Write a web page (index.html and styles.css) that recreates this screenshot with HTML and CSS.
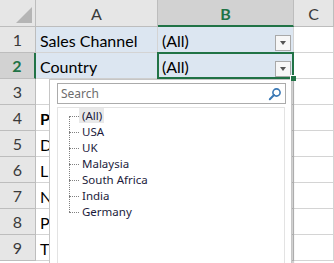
FILE: index.html
```html
<!DOCTYPE html>
<html lang="en">
  <head>
    <meta charset="UTF-8" />
    <title>Pivot filter</title>
    <link rel="stylesheet" href="styles.css">
  </head>
  <body>
    <div class="sheet">
      <div class="head corner"><span class="tri"></span></div>
      <div class="head col">A</div>
      <div class="head col sel">B</div>
      <div class="head col">C</div>

      <div class="head row">1</div>
      <div class="cell pivot">Sales Channel</div>
      <div class="cell pivot">(All)<span class="drop"></span></div>
      <div class="cell"></div>

      <div class="head row sel">2</div>
      <div class="cell pivot">Country</div>
      <div class="cell pivot active">(All)<span class="drop"></span><span class="handle"></span></div>
      <div class="cell"></div>

      <div class="head row">3</div>
      <div class="cell"></div>
      <div class="cell"></div>
      <div class="cell"></div>

      <div class="head row">4</div>
      <div class="cell bold">P</div>
      <div class="cell"></div>
      <div class="cell"></div>

      <div class="head row">5</div>
      <div class="cell">D</div>
      <div class="cell"></div>
      <div class="cell"></div>

      <div class="head row">6</div>
      <div class="cell">L</div>
      <div class="cell"></div>
      <div class="cell"></div>

      <div class="head row">7</div>
      <div class="cell">N</div>
      <div class="cell"></div>
      <div class="cell"></div>

      <div class="head row">8</div>
      <div class="cell">P</div>
      <div class="cell"></div>
      <div class="cell"></div>

      <div class="head row">9</div>
      <div class="cell">T</div>
      <div class="cell"></div>
      <div class="cell"></div>
    </div>

    <div class="filter">
      <div class="search">
        <span class="placeholder">Search</span>
        <svg class="glass" width="14" height="14" viewBox="0 0 14 14">
          <circle cx="8.5" cy="5.5" r="3.6" fill="none" stroke="#3a78b5" stroke-width="1.6"/>
          <line x1="6" y1="8" x2="1.8" y2="12.2" stroke="#3a78b5" stroke-width="2" stroke-linecap="round"/>
        </svg>
      </div>
      <div class="list">
        <ul class="tree">
          <li><span class="current">(All)</span></li>
          <li>USA</li>
          <li>UK</li>
          <li>Malaysia</li>
          <li>South Africa</li>
          <li>India</li>
          <li>Germany</li>
        </ul>
      </div>
    </div>
  </body>
</html>
```
FILE: styles.css
```css
body {
  margin: 0;
  background-color: #fff;
  overflow: hidden;
}
.sheet {
  display: grid;
  grid-template-columns: 36px 122px 136px 40px;
  grid-auto-rows: 26px;
  grid-template-rows: 27px;
  font-family: Lato, sans-serif;
  font-size: 16px;
  color: #000;
}
.head {
  box-sizing: border-box;
  background-color: #e6e6e6;
  border-right: 1px solid #bdbdbd;
  border-bottom: 1px solid #bdbdbd;
  color: #3a3a3a;
  display: flex;
  align-items: center;
  justify-content: center;
}
.corner {
  position: relative;
}
.tri {
  position: absolute;
  right: 3px;
  bottom: 3px;
  width: 0;
  height: 0;
  border-left: 16px solid transparent;
  border-bottom: 16px solid #b5b5b5;
}
.head.col {
  padding-top: 1px;
}
.head.sel {
  background-color: #d2d2d2;
  color: #217346;
  font-weight: bold;
}
.head.col.sel {
  border-bottom: 2px solid #217346;
}
.head.row.sel {
  border-right: 2px solid #217346;
}
.cell {
  box-sizing: border-box;
  border-right: 1px solid #d4d4d4;
  border-bottom: 1px solid #d4d4d4;
  padding: 0 0 2px 4px;
  display: flex;
  align-items: flex-end;
  position: relative;
  white-space: nowrap;
  overflow: hidden;
}
.cell.bold {
  font-weight: bold;
}
.cell.pivot {
  background-color: #dce6f1;
}
.active {
  overflow: visible;
}
.active::after {
  content: "";
  position: absolute;
  left: -1px;
  top: -1px;
  right: -1px;
  bottom: -1px;
  border: 2px solid #217346;
  pointer-events: none;
}
.drop {
  position: absolute;
  right: 2px;
  bottom: 1px;
  width: 16px;
  height: 16px;
  box-sizing: border-box;
  background-color: #f7f7f7;
  border: 1px solid #a9a9a9;
}
.drop::after {
  content: "";
  position: absolute;
  left: 4px;
  top: 5px;
  border-left: 3.5px solid transparent;
  border-right: 3.5px solid transparent;
  border-top: 4px solid #555;
}
.handle {
  position: absolute;
  right: -3px;
  bottom: -3px;
  width: 5px;
  height: 5px;
  background-color: #217346;
  border-left: 1px solid #fff;
  border-top: 1px solid #fff;
  z-index: 3;
}
.filter {
  position: absolute;
  left: 49px;
  top: 79px;
  width: 243px;
  height: 184px;
  box-sizing: border-box;
  background-color: #fff;
  border: 1px solid #c6c6c6;
  border-bottom: none;
  box-shadow: 2px 0 1px rgba(0, 0, 0, 0.18);
  padding: 3px 5px 0 7px;
  display: flex;
  flex-direction: column;
  gap: 3px;
  z-index: 2;
  font-family: "Noto Sans", sans-serif;
  font-size: 11.5px;
}
.search {
  height: 21px;
  box-sizing: border-box;
  border: 1px solid #ababab;
  display: flex;
  align-items: center;
  justify-content: space-between;
  padding: 0 3px 0 3px;
}
.placeholder {
  color: #6d6d6d;
  font-size: 12px;
}
.list {
  flex: 1;
  border: 1px solid #e3e3e3;
  border-bottom: none;
  margin-right: 1px;
}
.tree {
  list-style: none;
  margin: 0;
  padding: 0;
  position: relative;
  color: #1c1c3c;
}
.tree::before {
  content: "";
  position: absolute;
  left: 11px;
  top: 8px;
  bottom: 8px;
  border-left: 1px dotted #808080;
}
.tree li {
  position: relative;
  height: 16px;
  line-height: 16px;
  padding-left: 24px;
}
.tree li::before {
  content: "";
  position: absolute;
  left: 11px;
  top: 8px;
  width: 10px;
  border-top: 1px dotted #808080;
}
.current {
  display: inline-block;
  height: 15px;
  margin-left: -3px;
  padding: 0 2px 0 3px;
  background-color: #e9e9e9;
}
```
